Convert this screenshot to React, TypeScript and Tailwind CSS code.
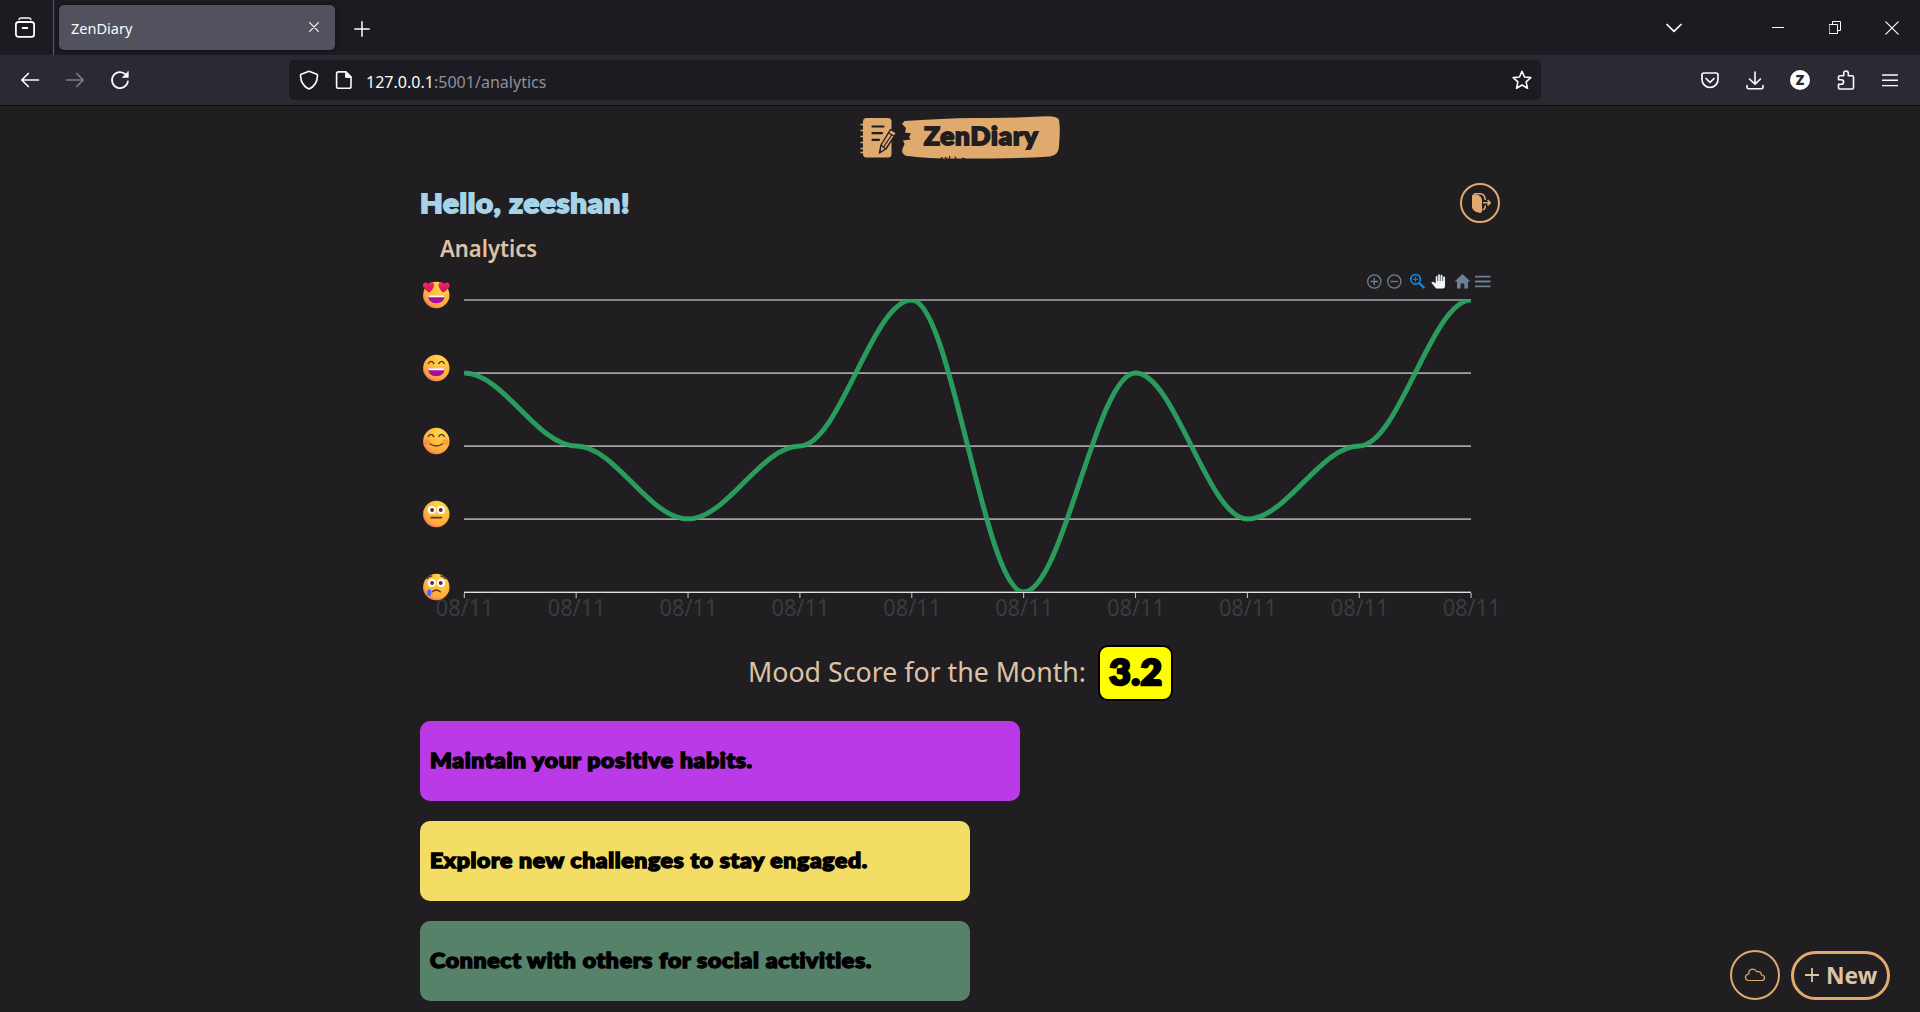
import type { ReactNode } from "react";

const STEP = 111.87;
const MOODS = [4, 3, 2, 3, 5, 1, 4, 2, 3, 5];
const px = (i: number) => 44.3 + i * STEP;
const py = (m: number) => 30 + (5 - m) * 73;

const curve = MOODS.map((m, i) => {
  if (i === 0) return `M${px(0)} ${py(m)}`;
  const d = STEP * 0.35;
  return `C${px(i - 1) + d} ${py(MOODS[i - 1])} ${px(i) - d} ${py(m)} ${px(i)} ${py(m)}`;
}).join(" ");

const HEAVY = "font-['Lato',sans-serif] font-black";

function Icon({ w = 20, h = 20, children, className = "" }: { w?: number; h?: number; children: ReactNode; className?: string }) {
  return (
    <svg width={w} height={h} viewBox={`0 0 ${w} ${h}`} fill="none" stroke="#fbfbfe" strokeWidth="1.6" strokeLinecap="round" strokeLinejoin="round" className={`block shrink-0 ${className}`}>
      {children}
    </svg>
  );
}

function TabBar() {
  return (
    <div className="flex h-[55px] items-center bg-[#1c1b22]">
      <div className="flex h-full w-[54px] items-center border-r border-[#5b5a63] pl-[15px]">
        <Icon w={20} h={22}>
          <path d="M4 2.5Q4.6 1 6 1H14Q15.4 1 16 2.5" strokeWidth="1.4" />
          <rect x="0.9" y="5" width="18.2" height="14.8" rx="2.6" strokeWidth="1.8" />
          <path d="M7.6 11H12.4" strokeWidth="1.8" />
        </Icon>
      </div>
      <div className="ml-[5px] flex h-[45px] w-[276px] items-center justify-between rounded-[5px] bg-[#52525e] pr-4 pl-3 shadow-[0_0_4px_rgba(0,0,0,.5)]">
        <span className="font-['Noto_Sans',sans-serif] text-[14.5px] leading-5 text-[#fbfbfe]">ZenDiary</span>
        <Icon w={10} h={10} className="mb-[2px]">
          <path d="M.7 .7 9.3 9.3M9.3 .7 .7 9.3" strokeWidth="1.2" />
        </Icon>
      </div>
      <Icon w={16} h={16} className="mt-[2px] ml-[18.5px]">
        <path d="M8 .8V15.2M.8 8H15.2" strokeWidth="1.5" />
      </Icon>
      <div className="ml-auto flex items-center pr-[21px]">
        <Icon w={16} h={10} className="mr-[90px]">
          <path d="M1 1.5 8 8.3 15 1.5" strokeWidth="1.7" />
        </Icon>
        <Icon w={12} h={10} className="mr-[45px]">
          <path d="M0 4.5H12" strokeWidth="1" strokeLinecap="butt" />
        </Icon>
        <Icon w={13} h={13} className="mr-[43px]">
          <path d="M.5 3.5H8.5V12.5H.5ZM3.5 3.5V.5H11.5V9.5H8.5" strokeWidth="1" strokeLinejoin="miter" />
        </Icon>
        <Icon w={14} h={14}>
          <path d="M.8 .8 13.2 13.2M13.2 .8 .8 13.2" strokeWidth="1.2" />
        </Icon>
      </div>
    </div>
  );
}

function Toolbar() {
  return (
    <div className="flex h-[51px] items-center border-b border-[#0c0c0d] bg-[#2b2a33]">
      <Icon w={20} h={16} className="ml-5">
        <path d="M1.8 8H18.5M8.3 1.5 1.8 8 8.3 14.5" strokeWidth="1.7" />
      </Icon>
      <Icon w={20} h={16} className="ml-[25px] opacity-40">
        <path d="M1.5 8H18.2M11.7 1.5 18.2 8 11.7 14.5" strokeWidth="1.7" />
      </Icon>
      <Icon w={20} h={20} className="ml-[25px]">
        <path d="M17.9 11.4A8 8 0 1 1 15.6 4.4" strokeWidth="1.7" />
        <path d="M18.3 1.6V7.4H12.5Z" fill="#fbfbfe" strokeWidth=".6" />
      </Icon>
      <div className="ml-[159px] flex h-10 w-[1252px] items-center rounded-[5px] bg-[#1c1b22]">
        <Icon w={20} h={20} className="ml-[10px]">
          <path d="M10 1.2 17.8 4.2Q18.6 4.6 18.5 5.6C18.2 12 15.5 16.6 10 19 4.500 16.6 1.800 12 1.500 5.600Q1.400 4.600 2.200 4.200Z" />
        </Icon>
        <Icon w={18} h={20} className="ml-4">
          <path d="M4 1.900H11L16 6.900V16.500Q16 18.300 14.200 18.300H3.400Q1.600 18.300 1.600 16.500V3.700Q1.600 1.900 3.400 1.900Z" />
          <path d="M10.600 2V7.400H16Z" fill="#fbfbfe" strokeWidth="1" />
        </Icon>
        <span className="mt-[3px] ml-[13px] inline-block origin-left scale-x-[0.972] font-['Noto_Sans',sans-serif] text-[16.500px] leading-6 whitespace-nowrap text-[#8f8f9b]">
          <span className="text-[#fbfbfe]">127.0.0.1</span>:5001/analytics
        </span>
        <Icon w={20} h={20} className="mr-[9px] ml-auto">
          <path d="M10 1.300 12.500 7 18.800 7.600 14.100 11.800 15.500 18.300 10 15 4.500 18.300 5.900 11.800 1.200 7.600 7.500 7Z" />
        </Icon>
      </div>
      <div className="ml-auto flex items-center pr-[22px]">
        <Icon w={18} h={17} className="mr-[27px]">
          <path d="M3 1H15Q17 1 17 3V7.500A8 8 0 0 1 1 7.500V3Q1 1 3 1ZM5 6.500 9 10.300 13 6.500" strokeWidth="1.700" />
        </Icon>
        <Icon w={18} h={19} className="mr-[26px]">
          <path d="M9 1V13M3.500 8 9 13.200 14.500 8M1 14.500V16Q1 17.700 2.700 17.700H15.300Q17 17.700 17 16V14.500" />
        </Icon>
        <span className="mr-[27px] flex size-5 items-center justify-center rounded-full bg-[#fbfbfe] font-['Open_Sans',sans-serif] text-[14px] leading-none font-extrabold text-[#2b2a33]">Z</span>
        <Icon w={18} h={20} className="mr-[27px]">
          <path d="M2.800 19Q1.500 19 1.500 17.700V14.300H4.300A2.300 2.300 0 0 0 4.300 9.700H1.500V7Q1.500 5.700 2.800 5.700H6.700V3.300A2.300 2.300 0 0 1 11.300 3.300V5.700H15.200Q16.500 5.700 16.500 7V17.700Q16.500 19 15.200 19Z" />
        </Icon>
        <Icon w={16} h={13}>
          <path d="M.5 1H15.500M.5 6.300H15.500M.5 11.600H15.500" strokeWidth="1.400" />
        </Icon>
      </div>
    </div>
  );
}

function Logo() {
  return (
    <div className="relative mx-auto h-[46px] w-[200px]">
      <svg width="200" height="46" viewBox="860 115 200 46" fill="none" className="absolute inset-0">
        <g fill="#e0a96d">
          <rect x="863" y="118" width="28.500" height="39.500" rx="3.500" />
          <path d="M904.500 121Q930 119.500 958 118.300C990 117.500 1018 118 1040 116.500Q1058 115 1059 120C1060.500 128 1059.500 138 1059 146Q1059 155 1050 156.500C1020 158.800 980 158.500 950 158.500 930 158.500 915 156.800 907 156Q901 154 902.500 149L904.500 144 903 140.500 910.500 139.500 909 137 911 133.500 905 132.500 906 128 902 124Z" />
        </g>
        <path d="M860.500 124.500H864M860.500 130.500H864M860.500 136.500H864M860.500 142.500H864M860.500 148.500H864M860.500 152.500H864" stroke="#e0a96d" strokeWidth="1.400" />
        <path d="M872.500 126.500H883.500M872.500 133.200H882M872.500 139.800H879" stroke="#201d20" strokeWidth="2.200" strokeLinecap="round" />
        <path d="M890.500 129.500 896.500 133 885.800 149 879.500 153 881 145Z" fill="#e0a96d" stroke="#201d20" strokeWidth="1.400" strokeLinejoin="round" />
        <path d="M881 145 885.800 149M888.500 132.800 894.300 136.300M892 134.500 883.500 147M879.500 153 880.700 150.500" stroke="#201d20" strokeWidth="1.200" />
        <path d="M940 158.800 943 157.500M945 157 947 159M950 156 949 158.800M955 156.500 956 159M962 158 965 158.800" stroke="#201d20" strokeWidth="1.200" />
      </svg>
      <span className={`absolute top-[7px] left-[64px] origin-left scale-x-[1.09] text-[24px] leading-[28px] tracking-[0.8px] text-[#211e21] [-webkit-text-stroke:1.8px_currentColor] ${HEAVY}`}>ZenDiary</span>
    </div>
  );
}

function Eyes({ kind }: { kind: number }) {
  if (kind === 5)
    return (
      <g fill="url(#heart)">
        <path d="M-6.800 -2.500C-10 -4.500 -13.800 -7.300 -13.300 -10.300 -12.800 -12.800 -9.500 -13.200 -8 -10.800 -6.800 -13.500 -2.800 -13.500 -2.200 -10.500 -1.800 -8 -4.500 -4.600 -6.800 -2.500Z" />
        <path d="M6.800 -2.500C10 -4.500 13.800 -7.300 13.300 -10.300 12.800 -12.800 9.500 -13.200 8 -10.800 6.800 -13.500 2.800 -13.500 2.200 -10.500 1.800 -8 4.500 -4.600 6.800 -2.500Z" />
      </g>
    );
  if (kind >= 3)
    return <path d="M-8 -4.500Q-5.300 -8.800 -2.500 -4.500M2.500 -4.500Q5.300 -8.800 8 -4.500" fill="none" stroke="#5b2f35" strokeWidth="1.400" strokeLinecap="round" />;
  return (
    <g>
      <circle cx="-4.500" cy="-4" r="4.100" fill="#fff" />
      <circle cx="4.700" cy="-4" r="4.100" fill="#fff" />
      <circle cx="-4.200" cy="-4" r="2" fill="#5b2f35" />
      <circle cx="4.400" cy="-4" r="2" fill="#5b2f35" />
    </g>
  );
}

function Face({ kind, y }: { kind: number; y: number }) {
  return (
    <g transform={`translate(16.300 ${y})`}>
      <circle r="13.200" fill="url(#face)" />
      <circle r="13.200" fill="url(#rim)" />
      <Eyes kind={kind} />
      {kind >= 4 && (
        <>
          <path d="M-8 .5H8Q8.300 8.300 0 8.300T-8 .5Z" fill="#aa0c9d" />
          <path d="M-8 .3H8L7.500 2.300H-7.500Z" fill="#fff" />
        </>
      )}
      {kind === 3 && (
        <>
          <circle cx="-9" cy="1" r="3" fill="#f76b4a" opacity=".4" />
          <circle cx="9" cy="1" r="3" fill="#f76b4a" opacity=".4" />
          <path d="M-6 3Q0 7 6 3" fill="none" stroke="#5b2f35" strokeWidth="1.400" strokeLinecap="round" />
        </>
      )}
      {kind === 2 && <path d="M-5 3.700H5" stroke="#5b2f35" strokeWidth="1.800" strokeLinecap="round" />}
      {kind === 1 && (
        <>
          <path d="M-4 4.800Q0 1.300 4 4.800M-9 -8.500Q-7 -11 -4.500 -11M9 -8.500Q7 -11 4.500 -11" fill="none" stroke="#5b2f35" strokeWidth="1.400" strokeLinecap="round" />
          <rect x="-9" y="2.500" width="4" height="6.500" rx="2" fill="#3d6df0" />
        </>
      )}
    </g>
  );
}

function Chart() {
  return (
    <svg width="1080" height="360" viewBox="0 0 1080 360" className="block overflow-visible">
      <defs>
        <radialGradient id="face" cx=".68" cy=".2" r=".9">
          <stop offset="0" stopColor="#ffd84a" />
          <stop offset=".55" stopColor="#ffb83b" />
          <stop offset="1" stopColor="#fb9a3c" />
        </radialGradient>
        <radialGradient id="rim" cx=".62" cy=".34" r=".76">
          <stop offset=".76" stopColor="#e2557a" stopOpacity="0" />
          <stop offset="1" stopColor="#e2557a" stopOpacity=".8" />
        </radialGradient>
        <linearGradient id="heart" x1="0" y1="0" x2="0" y2="1">
          <stop offset="0" stopColor="#f9286f" />
          <stop offset="1" stopColor="#c90f52" />
        </linearGradient>
        <clipPath id="plot">
          <rect x="44" y="29.500" width="1007.500" height="292.500" />
        </clipPath>
      </defs>
      {[5, 4, 3, 2].map((m) => (
        <g key={m}>
          <path d={`M44 ${py(m)}H1051`} stroke="#858385" strokeWidth="2" />
          {m < 5 && <path d={`M44 ${py(m) + 0.500}H1051`} stroke="#a2a0a2" strokeWidth="1" />}
        </g>
      ))}
      <path d="M44 321.500H1051" stroke="#6f6d6f" strokeWidth="1" />
      <path d="M44 322.500H1051" stroke="#e0e0e0" strokeWidth="1" />
      {MOODS.map((_, i) => (
        <g key={i}>
          <path d={`M${px(i)} 323V328`} stroke="#c8c8c8" strokeWidth="1" />
          <text x={px(i) - 28.500} y="345.700" textLength="58" lengthAdjust="spacingAndGlyphs" fill="#373d3f" fontSize="23.500" className="font-['Noto_Sans',sans-serif]">
            08/11
          </text>
        </g>
      ))}
      <path d={curve} fill="none" stroke="#2aa561" strokeOpacity=".93" strokeWidth="5" clipPath="url(#plot)" />
      {[5, 4, 3, 2, 1].map((m) => (
        <Face key={m} kind={m} y={25 + (5 - m) * 73} />
      ))}
      <g fill="none" stroke="#6e8192" strokeWidth="1.300">
        <circle cx="954.300" cy="11.500" r="6.600" />
        <path d="M950.500 11.500H958.100M954.300 7.700V15.300" />
        <circle cx="974.300" cy="11.500" r="6.600" />
        <path d="M970.500 11.500H978.100" />
        <path d="M1055 6.700H1070.500M1055 11.500H1070.500M1055 16.300H1070.500" strokeWidth="1.800" />
        <path d="M1042.500 4 1034.500 11.500H1037V18.500H1040.700V13.500H1044.300V18.500H1048V11.500H1050.500Z" fill="#6e8192" stroke="none" />
      </g>
      <g fill="none" stroke="#008ffb">
        <circle cx="995.600" cy="9.300" r="4.800" strokeWidth="1.700" />
        <path d="M993 9.300H998.200M995.600 6.700V11.900" strokeWidth="1" />
        <path d="M999.200 13 1004.300 18" strokeWidth="2.400" />
      </g>
      <path d="M1016 18.500 1011.500 12.800Q1012 11.500 1013.500 12L1015.800 13.300V6.500Q1016.500 5.400 1017.400 6.500V11H1018.100V4.800Q1019 3.700 1019.900 4.800V11H1020.600V5.300Q1021.500 4.200 1022.400 5.300V11H1023.100V7Q1024.200 6 1025 7V16Q1025 18.500 1022.500 18.500Z" fill="#f4f7f9" stroke="#8fa0ae" strokeWidth=".3" />
    </svg>
  );
}

const TIPS = [
  { text: "Maintain your positive habits.", box: "w-[600px] bg-[#b93ae6]", fit: "scale-x-[1.093]" },
  { text: "Explore new challenges to stay engaged.", box: "w-[550px] bg-[#f4dd65]", fit: "scale-x-[1.094]" },
  { text: "Connect with others for social activities.", box: "w-[550px] bg-[#56826a]", fit: "scale-x-[1.102]" },
];

export default function App() {
  return (
    <div className="relative h-[1012px] overflow-hidden bg-[#211e21]">
      <TabBar />
      <Toolbar />
      <main className="mx-auto w-[1080px] pt-[9px]">
        <Logo />
        <div className="mt-[22px] flex h-10 items-center justify-between">
          <h1 className={`origin-left scale-x-[1.09] text-[27px] leading-10 tracking-[0.7px] text-[#a5d3e8] [-webkit-text-stroke:1.8px_currentColor] ${HEAVY}`}>Hello, zeeshan!</h1>
          <button className="flex size-10 items-center justify-center rounded-full border-2 border-[#e0a96d]">
            <svg width="22" height="22" viewBox="0 0 22 22" fill="none" stroke="#e0a96d" strokeWidth="1.500">
              <path d="M3 4Q3 2.500 4.800 2.300L9 3Q13 4.500 13 8.500V19Q13 21 11 21L6 19.500Q3 17.500 3 15Z" fill="#e0a96d" stroke="none" />
              <path d="M5 1.800H11Q16 2 16.300 8M16.300 13.500Q16.200 17.500 13.500 17.800" />
              <path d="M14.500 10.700H20.500M18.300 7.800 21.500 10.700 18.300 13.600" stroke="#211e21" strokeWidth="4" />
              <path d="M14 10.700H21M18.500 8 21.300 10.700 18.500 13.400" strokeWidth="1.600" />
            </svg>
          </button>
        </div>
        <h2 className="ml-5 h-[47px] pt-[7px] font-['Noto_Sans',sans-serif] text-[24px] leading-[36px] font-semibold text-[#ddc3a5]">
          <span className="inline-block origin-left scale-x-[0.918]">Analytics</span>
        </h2>
        <Chart />
        <div className="mt-[15px] flex h-14 items-center">
          <span className="mb-[2px] ml-[328px] w-[350px] font-['Noto_Sans',sans-serif] text-[27px] leading-9 whitespace-nowrap text-[#ddc3a5]">
            <span className="inline-block origin-left scale-x-[0.99]">Mood Score for the Month:</span>
          </span>
          <span className={`flex h-14 w-[75px] items-center justify-center rounded-[10px] border-2 border-black bg-[#ffff00] pb-1 text-[36px] leading-none text-black ${HEAVY}`}>
            <span className="inline-block scale-x-[1.03] tracking-[0.5px] [-webkit-text-stroke:2.6px_currentColor]">3.2</span>
          </span>
        </div>
        <ul className="mt-5 flex flex-col gap-5">
          {TIPS.map((t) => (
            <li key={t.text} className={`flex h-20 items-center rounded-[10px] px-[10px] pb-[2px] text-[21px] text-black ${HEAVY} ${t.box}`}>
              <span className={`inline-block origin-left tracking-[0.6px] whitespace-nowrap [-webkit-text-stroke:1.5px_currentColor] ${t.fit}`}>{t.text}</span>
            </li>
          ))}
        </ul>
      </main>
      <div className="absolute right-[30px] bottom-3 flex items-center gap-[11px]">
        <button className="flex size-[50px] items-center justify-center rounded-full border-2 border-[#e0a96d]">
          <svg width="22" height="14" viewBox="0 0 22 14" fill="none" stroke="#e0a96d" strokeWidth="1.200">
            <path d="M4.500 12.500H18Q20.700 12 20.500 9.500 20 7 17.500 7 17.500 4 14.500 3.500L12.800 3.700Q11 .8 8 1.200 4.500 2 4.700 6 1.500 6.500 1.400 9.500 1.600 12.300 4.500 12.500Z" />
          </svg>
        </button>
        <button className="flex h-[49px] w-[99px] items-center justify-center gap-[7px] rounded-full border-3 border-[#e0a96d] pb-px font-['Noto_Sans',sans-serif] text-[24px] leading-none font-bold text-[#ddc3a5]">
          <svg width="14" height="14" viewBox="0 0 14 14" stroke="#ddc3a5" strokeWidth="1.800">
            <path d="M7 0V14M0 7H14" />
          </svg>
          <span className="inline-block w-[51px] origin-left scale-x-[0.95] text-left">New</span>
        </button>
      </div>
    </div>
  );
}
